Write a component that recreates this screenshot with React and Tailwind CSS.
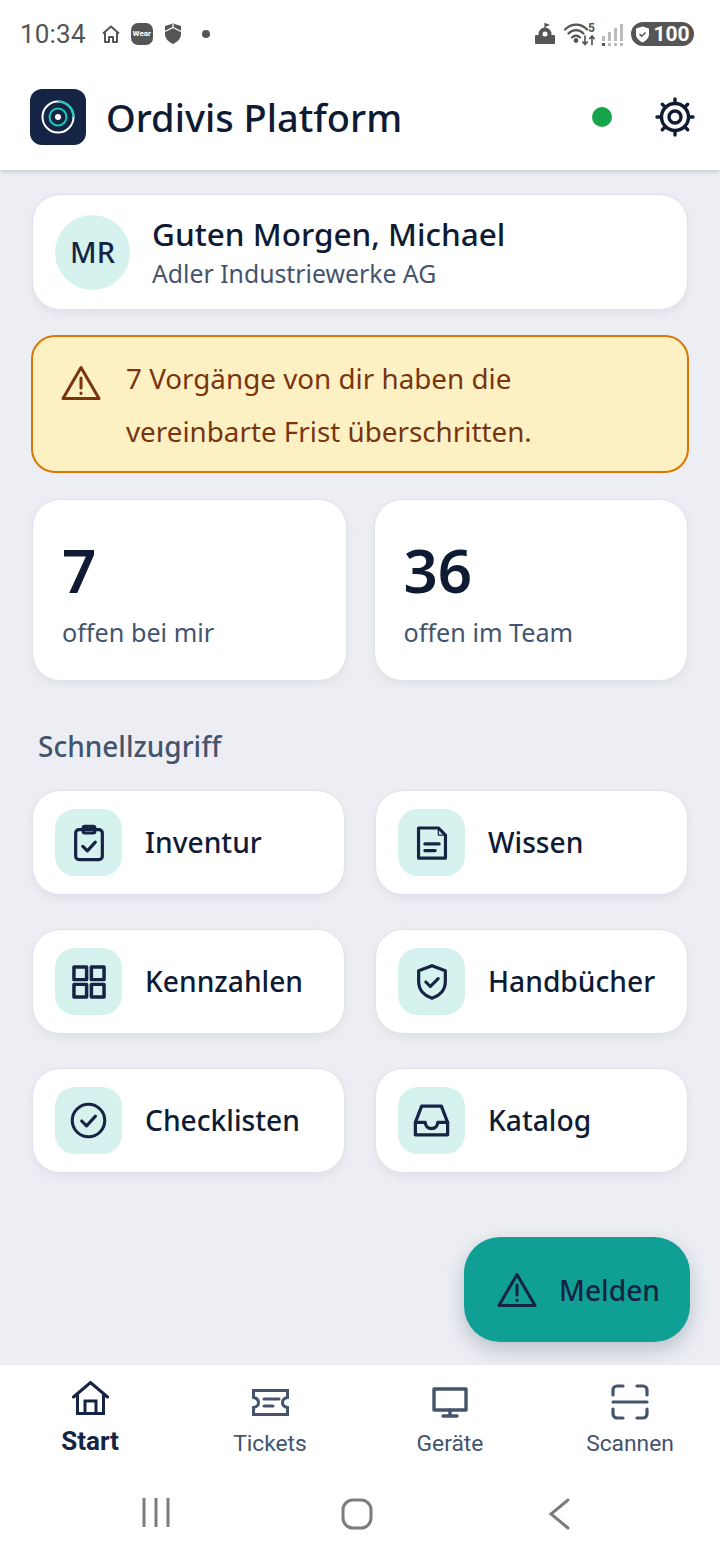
import React from 'react';

const NOTO = 'font-["Noto_Sans",sans-serif]';

const Svg = ({ size = 38, sw = 2, children }) => (
  <svg
    width={size}
    height={size}
    viewBox="0 0 24 24"
    fill="none"
    stroke="currentColor"
    strokeWidth={sw}
    strokeLinecap="round"
    strokeLinejoin="round"
  >
    {children}
  </svg>
);

const ClipboardIcon = () => (
  <Svg size={40} sw={1.9}>
    <rect x="4" y="4" width="16" height="18" rx="2" />
    <rect x="8.500" y="2" width="7" height="4" rx="1" />
    <path d="M8.300 14l2.700 2.700 4.800-5.200" />
  </Svg>
);

const DocIcon = () => (
  <Svg>
    <path d="M3.500 2.500h12.500l4.500 4.500v14.500H3.500z" />
    <path d="M16 2.500V7h4.500" strokeWidth={0.8} />
    <path d="M7.500 12.500h9M7.500 16.800h6.500" />
  </Svg>
);

const GridIcon = () => (
  <Svg sw={2.200}>
    <rect x="2.500" y="2.500" width="8" height="8" />
    <rect x="13.500" y="2.500" width="8" height="8" />
    <rect x="2.500" y="13.500" width="8" height="8" />
    <rect x="13.500" y="13.500" width="8" height="8" />
  </Svg>
);

const ShieldIcon = () => (
  <Svg size={40} sw={1.900}>
    <path d="M12 2.200 20 5.200V12c0 5-3.700 8.300-8 9.800C7.700 20.300 4 17 4 12V5.200z" />
    <path d="M8.300 12l2.700 2.700 4.700-4.700" />
  </Svg>
);

const CircleCheckIcon = () => (
  <Svg size={39} sw={1.900}>
    <circle cx="12" cy="12" r="10" />
    <path d="M7.800 12.300l3 3 5.500-6" />
  </Svg>
);

const InboxIcon = () => (
  <Svg size={43} sw={1.800}>
    <path d="M6.500 4h11L21 13v7H3v-7z" />
    <path d="M3 13h5.500c0 2 1.500 3.500 3.500 3.500s3.500-1.500 3.500-3.500H21" />
  </Svg>
);

const WarningIcon = () => (
  <svg width="40" height="36" viewBox="0 0 40 36" fill="none" stroke="currentColor" strokeWidth="3" strokeLinejoin="round" strokeLinecap="round">
    <path d="M20 2.500 38 33.500H2z" />
    <path d="M20 13v10M20 28v.5" />
  </svg>
);

const GearIcon = () => (
  <svg width="40" height="40" viewBox="0 0 40 40" fill="none" stroke="#0f1b33" strokeLinecap="round">
    <circle cx="20" cy="20" r="13.500" strokeWidth="3.400" />
    <circle cx="20" cy="20" r="6" strokeWidth="3.400" />
    <path
      d="M20 2v4M20 34v4M2 20h4M34 20h4M7.300 7.300l2.800 2.800M29.900 29.900l2.800 2.800M32.700 7.300l-2.800 2.800M10.100 29.900l-2.800 2.800"
      strokeWidth="3.400"
    />
  </svg>
);

const StatusBar = () => (
  <div className="h-[68px] flex items-center justify-between pl-[20px] pr-[26px] text-[#555555]">
    <div className="flex items-center">
      <span className='font-["Roboto",sans-serif] text-[26px] font-[450] leading-none tracking-[0.2px]'>10:34</span>
      <svg width="20" height="20" viewBox="0 0 20 20" fill="none" stroke="#555" strokeWidth="2" strokeLinejoin="round" className="ml-[15px]">
        <path d="M2 9.500 10 2.500l8 7M4 8v10h4v-5h4v5h4V8" />
      </svg>
      <div className='ml-[10px] w-[22px] h-[22px] rounded-[7px] bg-[#555555] flex items-center justify-center text-white font-["Roboto",sans-serif] text-[8px] font-bold'>
        Wear
      </div>
      <svg width="18" height="22" viewBox="0 0 18 22" className="ml-[11px]">
        <path d="M1 3l8-2.500L17 3v8c0 5-4 8-8 10-4-2-8-5-8-10z" fill="#555" />
        <path d="M1 8.500l8-4 8 4M9 4.500V1" stroke="#fff" strokeWidth="1.300" fill="none" />
      </svg>
      <div className="ml-[20px] w-[8px] h-[8px] rounded-full bg-[#555555]" />
    </div>
    <div className="flex items-center">
      <svg width="20" height="22" viewBox="0 0 20 22">
        <path d="M10 0v5" stroke="#555" strokeWidth="1.200" />
        <path d="M10 0l5 2-5 2z" fill="#555" />
        <circle cx="10" cy="11" r="6.500" fill="#555" />
        <rect x="0" y="12" width="20" height="9" rx="1" fill="#555" />
        <circle cx="10" cy="11" r="2.500" fill="#fff" />
      </svg>
      <div className="ml-[9px] relative w-[32px] h-[24px]">
        <svg width="32" height="24" viewBox="0 0 32 24" fill="none" stroke="#555" strokeWidth="2.200" strokeLinecap="round">
          <path d="M1 7.500c6.500-6.500 16-6.500 22 0M4.500 11.500c4.500-4.500 10.500-4.500 15 0M8 15.500c2.500-2.500 5.500-2.500 8 0" />
          <circle cx="12" cy="18.500" r="1.300" fill="#555" />
          <path d="M21 14v8.500M18.800 20l2.200 2.500 2.200-2.500M28 22.500V14M25.800 16.500l2.200-2.500 2.200 2.500" strokeWidth="1.700" />
        </svg>
        <span className='absolute right-[1px] top-[1px] font-["Roboto",sans-serif] text-[12px] font-bold leading-[11px]'>5</span>
      </div>
      <svg width="22" height="24" viewBox="0 0 22 24" fill="#bbbbbb" className="ml-[6px]">
        <rect x="0" y="14" width="3" height="5" />
        <rect x="6" y="10" width="3" height="9" />
        <rect x="12" y="6" width="3" height="13" />
        <rect x="18" y="2" width="3" height="17" />
        <rect x="0" y="21" width="3" height="3" fill="#555" />
        <rect x="6" y="21" width="3" height="3" />
        <rect x="12" y="21" width="3" height="3" />
        <rect x="18" y="21" width="3" height="3" />
      </svg>
      <div className="ml-[7px] w-[63px] h-[24px] rounded-full bg-[#555555] flex items-center justify-center gap-[3px] text-white">
        <svg width="15" height="17" viewBox="0 0 15 17">
          <path d="M7.500 0.500l6.500 2v5.500c0 4-3 6.500-6.500 8.500C4 14.500 1 12 1 8V2.500z" fill="#fff" />
          <path d="M4.500 8l2.200 2.200L10.500 6.500" stroke="#555" strokeWidth="1.600" fill="none" />
        </svg>
        <span className='font-["Roboto",sans-serif] text-[21px] font-bold leading-none'>100</span>
      </div>
    </div>
  </div>
);

const Header = () => (
  <div className="h-[102px] flex items-center pl-[30px] pr-[25px] pb-[5px] bg-white shadow-[0_3px_4px_-1px_rgba(15,27,51,0.16)] relative z-10">
    <div className="w-[56px] h-[56px] rounded-[12px] bg-[#152444] flex items-center justify-center">
      <svg width="36" height="36" viewBox="0 0 36 36" fill="none">
        <circle cx="18" cy="18" r="15.500" stroke="#fff" strokeWidth="2" />
        <path d="M18 2.500A15.500 15.500 0 0 1 33.500 18" stroke="#1ec8b4" strokeWidth="2.200" />
        <circle cx="18" cy="18" r="8.500" stroke="#1ec8b4" strokeWidth="2" />
        <circle cx="18" cy="18" r="3" fill="#fff" />
      </svg>
    </div>
    <h1 className={`${NOTO} ml-[20px] text-[38px] font-medium leading-none text-[#0f1b33]`}>Ordivis Platform</h1>
    <div className="ml-auto w-[20px] h-[20px] rounded-full bg-[#16a34a]" />
    <div className="ml-[43px]">
      <GearIcon />
    </div>
  </div>
);

const QUICK = [
  { label: 'Inventur', icon: <ClipboardIcon /> },
  { label: 'Wissen', icon: <DocIcon /> },
  { label: 'Kennzahlen', icon: <GridIcon /> },
  { label: 'Handbücher', icon: <ShieldIcon /> },
  { label: 'Checklisten', icon: <CircleCheckIcon /> },
  { label: 'Katalog', icon: <InboxIcon /> },
];

const Card = ({ className = '', children }) => (
  <div className={`bg-white border border-[#dfe2ec] shadow-[0_4px_10px_rgba(15,27,51,0.05)] ${className}`}>{children}</div>
);

const Stat = ({ value, label }) => (
  <Card className="h-[182px] rounded-[28px] pl-[29px] flex flex-col">
    <div className="mt-[36px] text-[60px] font-semibold leading-[68px] text-[#0f1b33]">{value}</div>
    <div className="mt-[11px] text-[25.200px] leading-[34px] text-[#44546e]">{label}</div>
  </Card>
);

const Main = () => (
  <main className={`${NOTO} relative flex-1 bg-[#eceef3] pt-[24px] px-[32px]`}>
    <Card className="h-[116px] rounded-[28px] pl-[22px] flex items-center">
      <div className="w-[75px] h-[75px] rounded-full bg-[#d6f2ee] flex items-center justify-center text-[29px] font-medium text-[#152444]">
        MR
      </div>
      <div className="ml-[22px]">
        <div className="-mt-[2px] text-[31.500px] font-medium leading-[40px] text-[#0f1b33]">Guten Morgen, Michael</div>
        <div className="mt-[3px] text-[24.800px] leading-[32px] text-[#44546e]">Adler Industriewerke AG</div>
      </div>
    </Card>

    <div className="mt-[25px] -mx-[1px] h-[138px] rounded-[24px] bg-[#fdf1c4] border-2 border-[#d97706] pl-[28px] flex items-center text-[#78350f]">
      <div className="-mt-[42px]">
        <WarningIcon />
      </div>
      <p className="ml-[25px] pt-[2px] text-[27.800px] leading-[53px]">
        7 Vorgänge von dir haben die
        <br />
        vereinbarte Frist überschritten.
      </p>
    </div>

    <div className="mt-[26px] grid grid-cols-2 gap-[27px]">
      <Stat value="7" label="offen bei mir" />
      <Stat value="36" label="offen im Team" />
    </div>

    <h2 className="mt-[45px] ml-[6px] text-[28px] font-medium leading-[40px] text-[#44546e]">Schnellzugriff</h2>

    <div className="mt-[24px] grid grid-cols-2 gap-x-[30px] gap-y-[34px]">
      {QUICK.map((q) => (
        <Card key={q.label} className="h-[105px] rounded-[28px] pl-[22px] flex items-center">
          <div className="w-[67px] h-[67px] rounded-[20px] bg-[#d6f2ee] flex items-center justify-center text-[#152444]">
            {q.icon}
          </div>
          <span className="ml-[23px] text-[28.200px] font-medium text-[#0f1b33]">{q.label}</span>
        </Card>
      ))}
    </div>

    <button className="absolute right-[30px] bottom-[23px] w-[226px] h-[105px] rounded-[36px] bg-[#0f9f94] flex items-center pl-[33px] pt-[1px] shadow-[0_8px_20px_rgba(15,27,51,0.22)] text-[#152444]">
      <WarningIcon />
      <span className="ml-[22px] text-[28.200px] font-medium">Melden</span>
    </button>
  </main>
);

const NAV = [
  {
    label: 'Start',
    active: true,
    icon: (
      <svg width="37" height="34" viewBox="0 0 37 34" fill="none" stroke="currentColor" strokeWidth="3" strokeLinecap="round" strokeLinejoin="miter">
        <path d="M1.500 16 18.500 1.500 35.500 16M5.500 13v19.500h26V13M13 32.500V20h11v12.500" />
      </svg>
    ),
  },
  {
    label: 'Tickets',
    icon: (
      <svg width="37" height="27" viewBox="0 0 37 27" fill="none" stroke="currentColor" strokeWidth="3" strokeLinejoin="miter" strokeLinecap="round">
        <path d="M1.500 1.500h34v7c-3 .5-5 2.500-5 5s2 4.500 5 5v7h-34v-7c3-.5 5-2.500 5-5s-2-4.500-5-5z" />
        <path d="M12 10h15M12 17h9" />
      </svg>
    ),
  },
  {
    label: 'Geräte',
    icon: (
      <svg width="36" height="31" viewBox="0 0 36 31" fill="none" stroke="currentColor" strokeWidth="3.400" strokeLinejoin="round" strokeLinecap="round">
        <rect x="2" y="2" width="32" height="21" />
        <path d="M18 23v6M11 29h14" />
      </svg>
    ),
  },
  {
    label: 'Scannen',
    icon: (
      <svg width="38" height="36" viewBox="0 0 38 36" fill="none" stroke="currentColor" strokeWidth="3.200" strokeLinecap="round" strokeLinejoin="round">
        <path d="M12 2H6a4 4 0 0 0-4 4v5M26 2h6a4 4 0 0 1 4 4v5M12 34H6a4 4 0 0 1-4-4v-5M26 34h6a4 4 0 0 0 4-4v-5M2 18h34" />
      </svg>
    ),
  },
];

const BottomNav = () => (
  <nav className='h-[115px] bg-white grid grid-cols-4 font-["Roboto",sans-serif]'>
    {NAV.map((n) => (
      <div key={n.label} className={`flex flex-col items-center ${n.active ? 'text-[#152444]' : 'text-[#44546e]'}`}>
        <div className={`h-[54px] mt-[10px] flex items-center justify-center ${n.active ? 'pb-[8px]' : ''}`}>{n.icon}</div>
        <span className={`leading-[30px] ${n.active ? '-mt-[3px] font-bold text-[26px]' : 'text-[22.800px]'}`}>{n.label}</span>
      </div>
    ))}
  </nav>
);

const SystemNav = () => (
  <div className="h-[80px] bg-white flex items-start pt-[18px] text-[#7c7c7c]">
    <div className="w-[171px] flex justify-end">
      <svg width="30" height="30" viewBox="0 0 30 30" stroke="currentColor" strokeWidth="3">
        <path d="M3 0v29M15 0v29M27 0v29" />
      </svg>
    </div>
    <div className="ml-[170px]">
      <svg width="32" height="32" viewBox="0 0 32 32" fill="none" stroke="currentColor" strokeWidth="3">
        <rect x="2" y="2" width="28" height="28" rx="10" />
      </svg>
    </div>
    <div className="ml-[175px]">
      <svg width="22" height="32" viewBox="0 0 22 32" fill="none" stroke="currentColor" strokeWidth="3" strokeLinecap="round">
        <path d="M20 2 3 16l17 14" />
      </svg>
    </div>
  </div>
);

const App = () => (
  <div className="w-[720px] h-[1560px] bg-white flex flex-col overflow-hidden">
    <StatusBar />
    <Header />
    <Main />
    <BottomNav />
    <SystemNav />
  </div>
);

export default App;
